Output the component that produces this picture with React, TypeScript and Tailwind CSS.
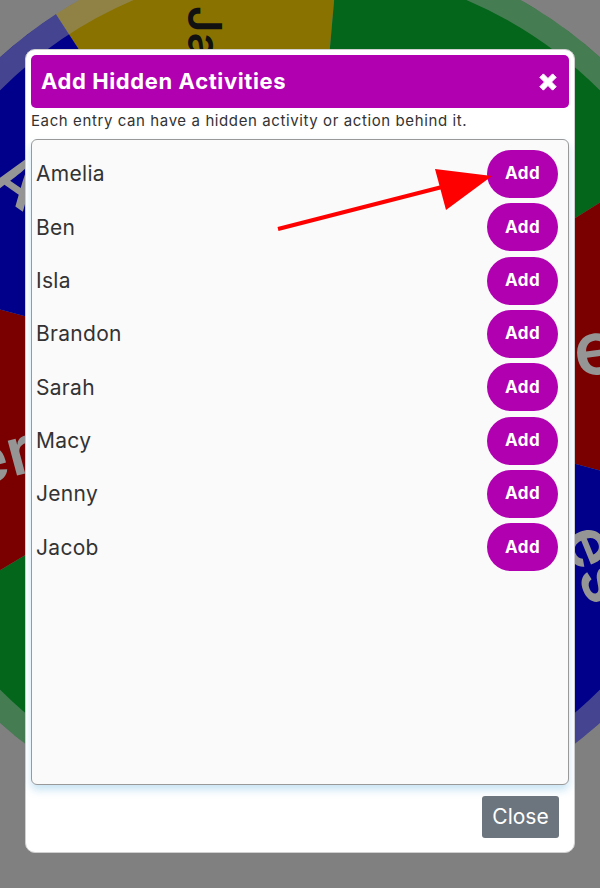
import React from "react";

const names = ["Amelia", "Ben", "Isla", "Brandon", "Sarah", "Macy", "Jenny", "Jacob"];

// wheel slices behind the overlay, angles clockwise from 12 o'clock
const slices = [
  { a0: -33, a1: 5, color: "#8a7200" },
  { a0: 5, a1: 58, color: "#03661a" },
  { a0: 58, a1: 105, color: "#7a0000" },
  { a0: 105, a1: 150, color: "#00008a" },
  { a0: 150, a1: 195, color: "#8a7200" },
  { a0: 195, a1: 239, color: "#03661a" },
  { a0: 239, a1: 285, color: "#7a0000" },
  { a0: 285, a1: 327, color: "#00008a" },
];

const CX = 300;
const CY = 390;
const R = 448;

function pt(a: number, r: number) {
  const t = (a * Math.PI) / 180;
  return `${CX + r * Math.sin(t)} ${CY - r * Math.cos(t)}`;
}

function Wheel() {
  return (
    <svg className="absolute inset-0" width="600" height="888" viewBox="0 0 600 888">
      {slices.map((s, i) => (
        <path
          key={i}
          d={`M${CX} ${CY} L${pt(s.a0, R)} A${R} ${R} 0 0 1 ${pt(s.a1, R)} Z`}
          fill={s.color}
        />
      ))}
      <circle cx={CX} cy={CY} r={436} fill="none" stroke="rgba(150,150,150,0.45)" strokeWidth="24" />
      <g fontFamily="Inter, sans-serif" fontWeight="600">
        <text transform="translate(188,6) rotate(90)" fontSize="46" fill="#111">
          Jacob
        </text>
        <text transform="translate(-14,186) rotate(35)" fontSize="64" fill="#959595">
          Amelia
        </text>
        <text transform="translate(38,470) rotate(-15)" fontSize="66" fill="#959595" textAnchor="end">
          Peter
        </text>
        <text transform="translate(577,377) rotate(-8)" fontSize="74" fill="#959595">
          e
        </text>
        <text transform="translate(562,536) rotate(68)" fontSize="68" fill="#959595">
          es
        </text>
      </g>
    </svg>
  );
}

function Arrow() {
  return (
    <svg className="absolute inset-0 pointer-events-none" width="600" height="888" viewBox="0 0 600 888">
      <line x1="278" y1="229" x2="442" y2="187" stroke="#ff0000" strokeWidth="4" />
      <polygon points="492,176 435,169 446,210" fill="#ff0000" />
    </svg>
  );
}

export default function App() {
  return (
    <div className="relative w-[600px] h-[888px] overflow-hidden bg-[#808080] font-['Inter',sans-serif]">
      <Wheel />

      <div className="relative ml-[25px] mt-[49px] w-[550px] h-[804px] flex flex-col bg-white border border-[#d0d0d0] rounded-[10px] p-[5px]">
        {/* header */}
        <div className="h-[53px] flex items-center justify-between bg-[#b000b0] rounded-[5px] pl-[10px] pr-[11px]">
          <h1 className="text-white text-[22px] font-bold tracking-[0.6px]">Add Hidden Activities</h1>
          <svg width="20" height="20" viewBox="0 0 16 16">
            <path
              d="M1.5 4.3 L4.3 1.5 L8 5.2 L11.7 1.5 L14.5 4.3 L10.8 8 L14.5 11.7 L11.7 14.5 L8 10.8 L4.3 14.5 L1.5 11.7 L5.2 8Z"
              fill="white"
              stroke="white"
              strokeWidth="0.8"
              strokeLinejoin="round"
            />
          </svg>
        </div>

        <p className="pt-[3px] leading-[20px] text-[15px] tracking-[0.6px] text-[#333]">
          Each entry can have a hidden activity or action behind it.
        </p>

        {/* entries */}
        <div className="mt-[8px] h-[646px] bg-[#fafafa] border border-[#999] rounded-[6px] shadow-[0_5px_8px_rgba(0,130,200,0.22)] pt-[10px] pl-[4px] pr-[10px] flex flex-col gap-[5.33px]">
          {names.map((n) => (
            <div key={n} className="h-[48px] flex items-center justify-between">
              <span className="text-[21px] tracking-[0.3px] text-[#333]">{n}</span>
              <button className="w-[71px] h-[48px] rounded-full bg-[#b000b0] text-white text-[17px] tracking-[0.5px] font-bold">
                Add
              </button>
            </div>
          ))}
        </div>

        <div className="mt-[11px] flex justify-end pr-[10px]">
          <button className="w-[77px] h-[42px] bg-[#6c757d] text-white text-[21px] rounded-[3px]">
            Close
          </button>
        </div>
      </div>

      <Arrow />
    </div>
  );
}
